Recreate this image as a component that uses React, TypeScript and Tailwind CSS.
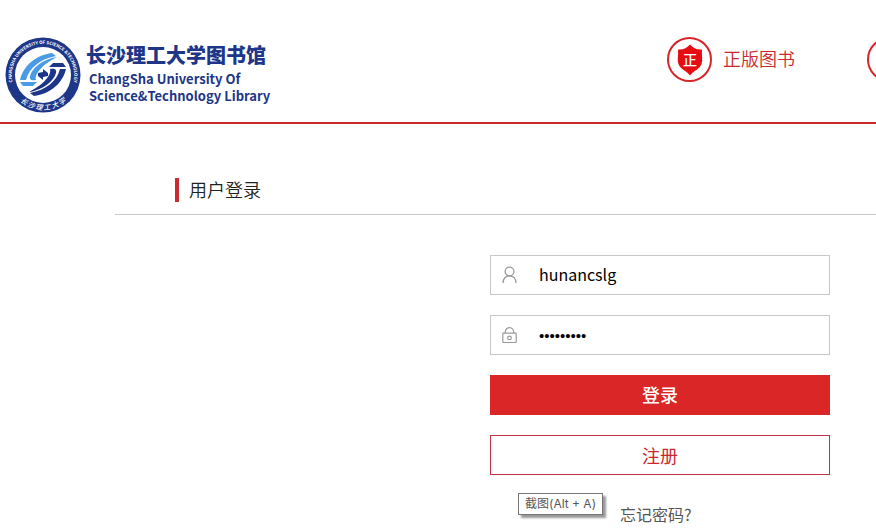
import { useState } from "react";

function UniversityCrest() {
  return (
    <svg viewBox="0 0 76 76" className="size-[76px] shrink-0" role="img" aria-label="长沙理工大学">
      <defs>
        <path id="crest-top" d="M9.7 51.2 A31.2 31.2 0 1 1 66.3 51.2" />
        <path id="crest-bottom" d="M7.7 55.5 A35 35 0 0 0 68.3 55.5" />
      </defs>
      <circle cx="38" cy="38" r="37.5" fill="#1d3687" />
      <circle cx="38" cy="38" r="28" fill="#fff" />
      <text fill="#fff" fontSize="4.4" fontWeight="700">
        <textPath href="#crest-top" startOffset="50%" textAnchor="middle">
          CHANGSHA UNIVERSITY OF SCIENCE &amp;TECHNOLOGY
        </textPath>
      </text>
      <text fill="#fff" fontSize="7" fontStyle="italic" fontWeight="500">
        <textPath href="#crest-bottom" startOffset="50%" textAnchor="middle">
          长 沙 理 工 大 学
        </textPath>
      </text>
      <g fill="#4a9be6">
        <path d="M47 16 L51 19 C35 22 24 31 21 43 L15 43 C18 29 31 18 47 16 Z" />
        <path d="M15 45 L32 45 L28 49 L18 49 Z" />
        <path d="M52 20 C38 22 27 31 25 39 C24 43 27 44 31 43 C29 36 40 26 52 20 Z" />
      </g>
      <g fill="#1d3687" transform="rotate(180 38 37.5)">
        <path d="M47 16 L51 19 C35 22 24 31 21 43 L15 43 C18 29 31 18 47 16 Z" />
        <path d="M15 45 L32 45 L28 49 L18 49 Z" />
        <path d="M52 20 C38 22 27 31 25 39 C24 43 27 44 31 43 C29 36 40 26 52 20 Z" />
      </g>
      <path d="M33 39 L33 36 L38 35 V32 L43 36 L43 39 L38 40 V43 Z" fill="#1d3687" />
    </svg>
  );
}

const badgeClass = "flex size-[45px] shrink-0 items-center justify-center rounded-full border-2 border-[#d5262b]";

function GenuineBadge() {
  return (
    <span className={badgeClass}>
      <svg viewBox="0 0 26 32" className="h-8 w-[26px]" aria-hidden="true">
        <path d="M13 0.5 C10 4 6 6 1 5.5 C1.5 11 0 16 1.5 20 C3 25 10 27 13 31.5 C16 27 23 25 24.5 20 C26 16 24.5 11 25 5.5 C20 6 16 4 13 0.5 Z" fill="#e60d12" />
        <text x="13" y="21" textAnchor="middle" fontSize="14" fontWeight="500" fill="#fff">正</text>
      </svg>
    </span>
  );
}

function UserIcon() {
  return (
    <svg viewBox="0 0 16 18" className="h-[18px] w-4" fill="none" stroke="#999" strokeWidth="1.3" aria-hidden="true">
      <circle cx="7.5" cy="5.5" r="4.4" />
      <path d="M1 17 C1 12.5 3.7 9.8 7.5 9.8 C11.3 9.8 14 12.5 14 17" />
    </svg>
  );
}

function LockIcon() {
  return (
    <svg viewBox="0 0 16 18" className="h-[18px] w-4" fill="none" stroke="#999" strokeWidth="1.2" aria-hidden="true">
      <rect x="0.8" y="7.2" width="13.4" height="9.3" rx="0.5" />
      <path d="M3.2 7 C3.2 -0.3 11.8 -0.3 11.8 7" />
      <circle cx="7.5" cy="11.9" r="1.8" />
    </svg>
  );
}

export default function App() {
  const [user, setUser] = useState("hunancslg");
  const [password, setPassword] = useState("library01");

  return (
    <div className="min-h-screen overflow-hidden bg-white font-['Noto_Sans_CJK_SC','Noto_Sans',sans-serif] text-[#333]">
      <header className="flex items-start border-b-2 border-[#c9292c] pt-[37px] pb-[9px] pl-[5px]">
        <a href="#" className="flex w-[662px] shrink-0 items-start gap-[5px] text-[#1d3687]">
          <UniversityCrest />
          <span className="flex flex-col gap-px pt-1">
            <span className="text-xl leading-7 font-black">长沙理工大学图书馆</span>
            <span className="pl-[3px] text-[13px] leading-[17px] font-bold">
              ChangSha University Of
              <br />
              Science&amp;Technology Library
            </span>
          </span>
        </a>
        <nav className="flex">
          <a href="#" className="flex w-[200px] shrink-0 items-center gap-[11px] text-lg leading-7 font-[350] text-[#c9292c]">
            <GenuineBadge />
            <span className="-mt-1">正版图书</span>
          </a>
          <span className={badgeClass} />
        </nav>
      </header>

      <main className="ml-[115px] w-[1090px]">
        <div className="mt-[52px] flex items-center gap-[10px] border-b border-[#c8c8c8] pb-3 pl-[60px]">
          <span className="mt-[2px] h-6 w-1 bg-[#cb2a30]" />
          <h1 className="text-lg leading-[26px] font-[350] text-[#222]">用户登录</h1>
        </div>

        <form className="relative mx-auto mt-10 flex w-[340px] flex-col gap-5" onSubmit={(e) => e.preventDefault()}>
          <label className="flex h-10 items-center border border-[#c8c8c8] pl-[11px]">
            <UserIcon />
            <input
              type="text"
              aria-label="用户名"
              value={user}
              onChange={(e) => setUser(e.target.value)}
              className="ml-[21px] min-w-0 flex-1 bg-transparent pb-[2px] text-base text-black outline-none"
            />
          </label>
          <label className="flex h-10 items-center border border-[#c8c8c8] pl-[11px]">
            <LockIcon />
            <input
              type="password"
              aria-label="密码"
              value={password}
              onChange={(e) => setPassword(e.target.value)}
              className="ml-[21px] min-w-0 flex-1 bg-transparent pt-[2px] font-['Liberation_Sans',sans-serif] text-[15px] text-black outline-none"
            />
          </label>
          <button type="submit" className="h-10 bg-[#da2626] pb-[2px] text-lg font-medium text-white">
            登录
          </button>
          <button type="button" className="h-10 border border-[#c23246] text-lg text-[#c9292c]">
            注册
          </button>
          <a href="#" className="mt-[7px] ml-[130px] text-base leading-6 text-[#555]">
            忘记密码?
          </a>
          <div
            role="tooltip"
            className="absolute top-[238px] left-7 border border-[#767676] bg-white px-[6px] font-['Inter','Noto_Sans_CJK_SC',sans-serif] text-xs leading-5 whitespace-nowrap text-[#575757] shadow-[3px_3px_2px_#999]"
          >
            截图(Alt + A)
          </div>
        </form>
      </main>
    </div>
  );
}
